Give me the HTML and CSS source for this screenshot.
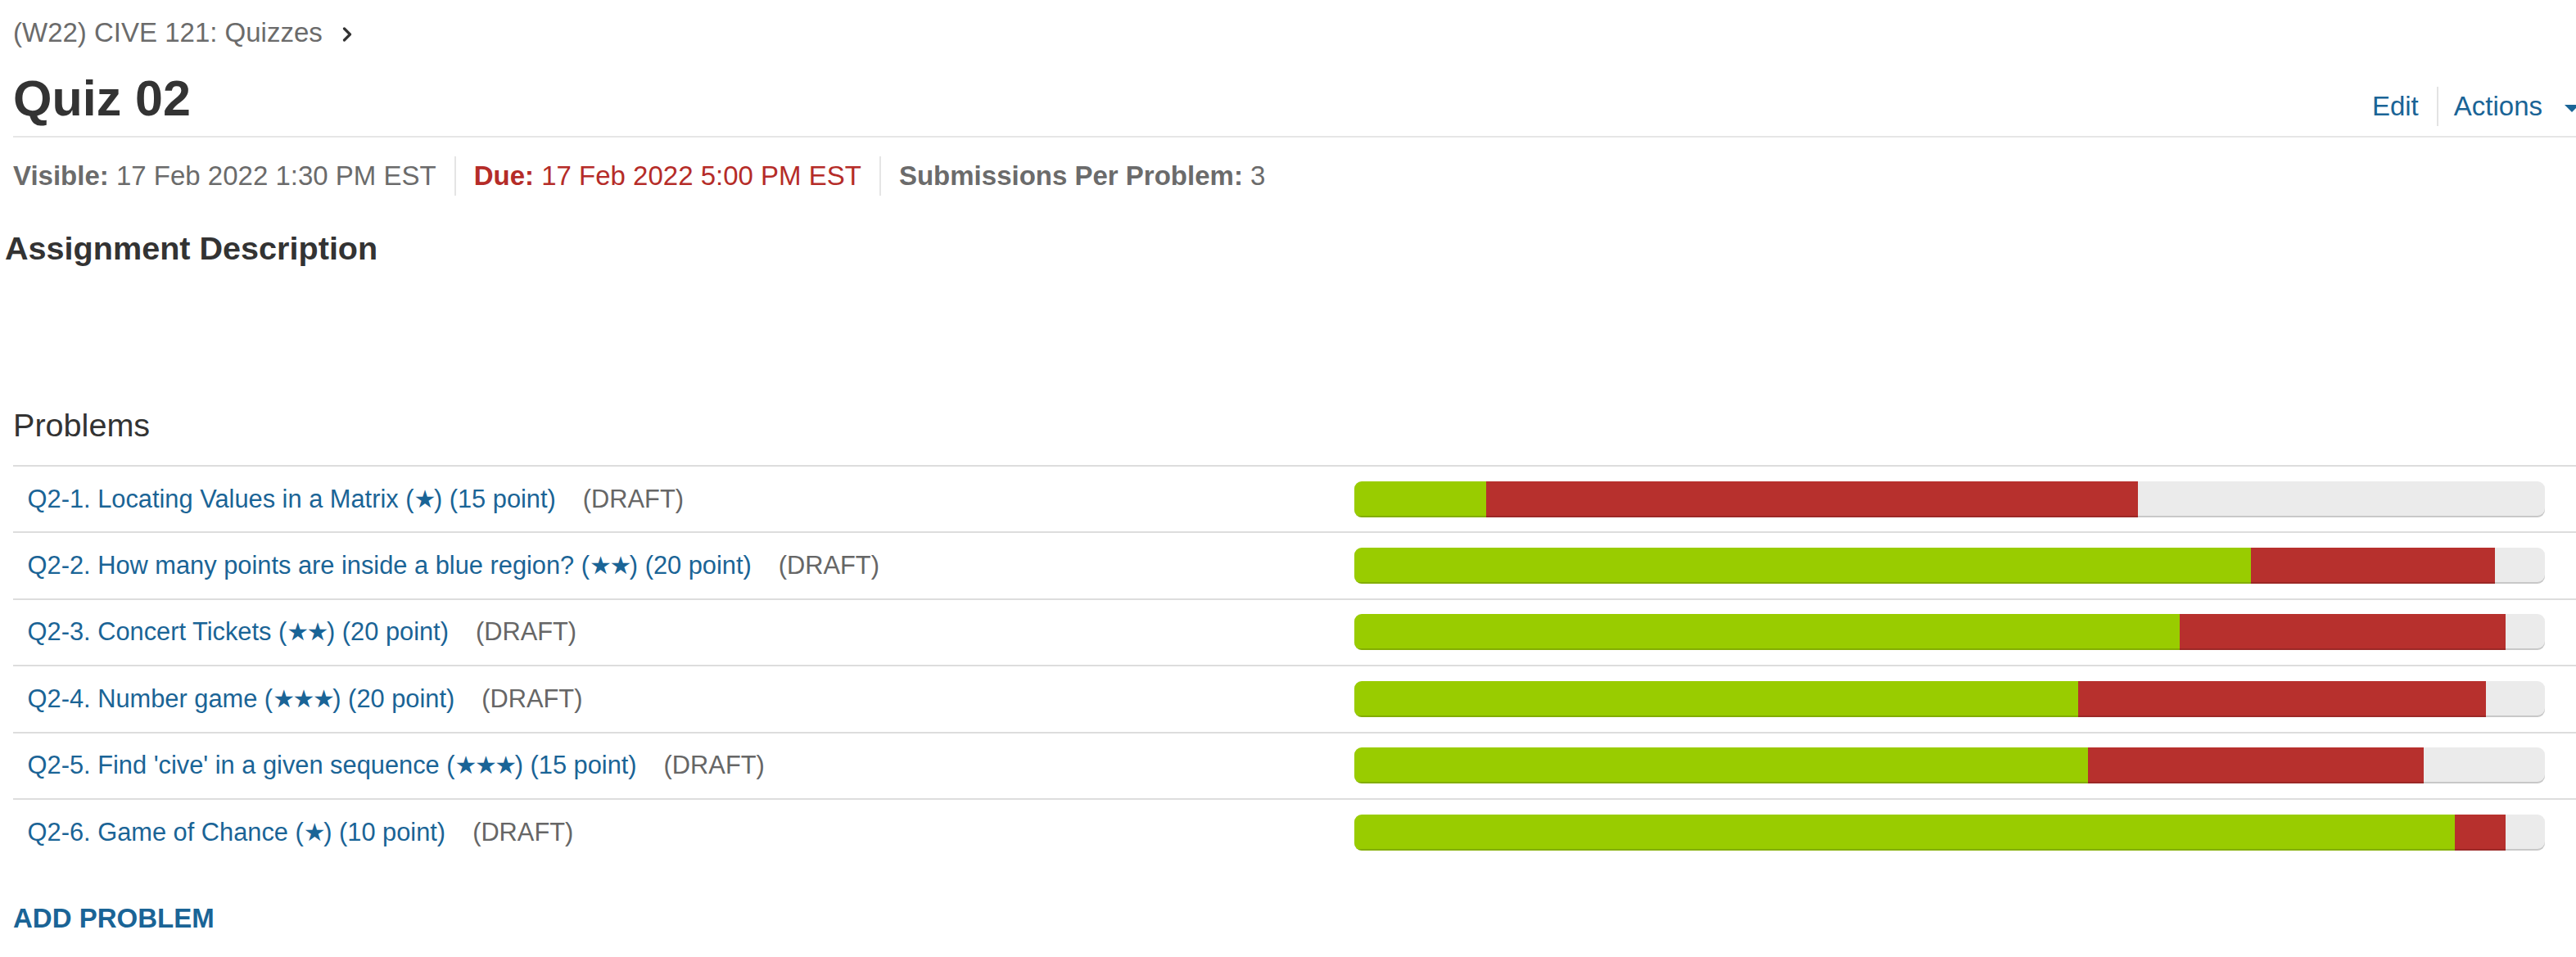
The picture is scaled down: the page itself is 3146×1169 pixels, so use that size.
FILE: index.html
```html
<!DOCTYPE html>
<html lang="en">
<head>
<meta charset="utf-8">
<title>Quiz 02</title>
<link rel="stylesheet" href="styles.css">
</head>
<body>
<nav class="breadcrumb">
  <a class="crumb" href="#">(W22) CIVE 121: Quizzes</a>
  <svg class="chev" viewBox="0 0 12 18" aria-hidden="true"><path d="M2.5 2 L9.5 9 L2.5 16" fill="none" stroke="#333" stroke-width="3.2" stroke-linecap="round" stroke-linejoin="round"/></svg>
</nav>

<header class="page-header">
  <h1>Quiz 02</h1>
  <div class="actions">
    <a class="edit" href="#">Edit</a>
    <a class="more" href="#">Actions<span class="caret"></span></a>
  </div>
</header>

<div class="meta">
  <div class="item"><b>Visible:</b> 17 Feb 2022 1:30 PM EST</div>
  <div class="item due"><b>Due:</b> 17 Feb 2022 5:00 PM EST</div>
  <div class="item"><b>Submissions Per Problem:</b> 3</div>
</div>

<h2 class="desc-title">Assignment Description</h2>

<h3 class="problems-title">Problems</h3>

<div class="problem-list">
  <div class="problem">
    <div class="name"><a href="#">Q2-1. Locating Values in a Matrix (<span class="stars">★</span>) (15 point)</a><span class="draft">(DRAFT)</span></div>
    <div class="bar-cell"><div class="bar"><div class="seg ok" style="width:11.1%"></div><div class="seg bad" style="width:54.7%"></div></div></div>
  </div>
  <div class="problem">
    <div class="name"><a href="#">Q2-2. How many points are inside a blue region? (<span class="stars">★★</span>) (20 point)</a><span class="draft">(DRAFT)</span></div>
    <div class="bar-cell"><div class="bar"><div class="seg ok" style="width:75.3%"></div><div class="seg bad" style="width:20.5%"></div></div></div>
  </div>
  <div class="problem">
    <div class="name"><a href="#">Q2-3. Concert Tickets (<span class="stars">★★</span>) (20 point)</a><span class="draft">(DRAFT)</span></div>
    <div class="bar-cell"><div class="bar"><div class="seg ok" style="width:69.3%"></div><div class="seg bad" style="width:27.4%"></div></div></div>
  </div>
  <div class="problem">
    <div class="name"><a href="#">Q2-4. Number game (<span class="stars">★★★</span>) (20 point)</a><span class="draft">(DRAFT)</span></div>
    <div class="bar-cell"><div class="bar"><div class="seg ok" style="width:60.8%"></div><div class="seg bad" style="width:34.2%"></div></div></div>
  </div>
  <div class="problem">
    <div class="name"><a href="#">Q2-5. Find 'cive' in a given sequence (<span class="stars">★★★</span>) (15 point)</a><span class="draft">(DRAFT)</span></div>
    <div class="bar-cell"><div class="bar"><div class="seg ok" style="width:61.6%"></div><div class="seg bad" style="width:28.2%"></div></div></div>
  </div>
  <div class="problem">
    <div class="name"><a href="#">Q2-6. Game of Chance (<span class="stars">★</span>) (10 point)</a><span class="draft">(DRAFT)</span></div>
    <div class="bar-cell"><div class="bar"><div class="seg ok" style="width:92.4%"></div><div class="seg bad" style="width:4.3%"></div></div></div>
  </div>
</div>

<a class="add" href="#">ADD PROBLEM</a>
</body>
</html>
```

FILE: styles.css
```css
* { box-sizing: border-box; }

html, body {
  margin: 0;
  padding: 0;
}

body {
  width: 3146px;
  overflow: hidden;
  background: #ffffff;
  color: #333333;
  font-family: "Liberation Sans", Arial, "DejaVu Sans", sans-serif;
}

a {
  color: #1a6496;
  text-decoration: none;
}

/* breadcrumb */
.breadcrumb {
  display: flex;
  align-items: center;
  gap: 24px;
  height: 80px;
  padding-left: 16px;
  font-size: 33px;
  line-height: 80px;
}

.breadcrumb .crumb {
  color: #6b6b6b;
}

.breadcrumb .chev {
  width: 12px;
  height: 18px;
  margin-top: 3px;
}

/* page header */
.page-header {
  display: flex;
  justify-content: space-between;
  align-items: baseline;
  margin: 0 -4px 0 16px;
  padding: 0 0 6px;
  border-bottom: 2px solid #e6e6e6;
}

.page-header h1 {
  margin: 0;
  font-size: 61px;
  line-height: 80px;
  font-weight: 700;
  color: #333333;
}

.actions {
  display: flex;
  align-items: baseline;
}

.actions a {
  font-size: 33px;
  line-height: 48px;
  color: #1a6496;
}

.actions .edit {
  padding-right: 22px;
  border-right: 2px solid #e3e3e3;
}

.actions .more {
  padding-left: 19px;
}

.caret {
  display: inline-block;
  width: 0;
  height: 0;
  margin-left: 27px;
  vertical-align: middle;
  border-top: 9px solid #1a6496;
  border-left: 9px solid transparent;
  border-right: 9px solid transparent;
}

/* meta */
.meta {
  display: flex;
  margin: 23px 0 0 16px;
  font-size: 33px;
  line-height: 48px;
  color: #6b6b6b;
}

.meta .item {
  padding: 0 22px;
  border-left: 2px solid #e5e5e5;
  white-space: nowrap;
}

.meta .item:first-child {
  padding-left: 0;
  border-left: 0;
}

.meta .due {
  color: #b52c28;
}

/* section titles */
.desc-title {
  margin: 42px 0 0 6px;
  font-size: 39.6px;
  line-height: 44px;
  font-weight: 700;
  color: #333333;
}

.problems-title {
  margin: 172px 0 0 16px;
  font-size: 39.6px;
  line-height: 44px;
  font-weight: 400;
  color: #333333;
}

/* problems */
.problem-list {
  margin: 27px 0 0 16px;
}

.problem {
  display: grid;
  grid-template-columns: 1620px 1490px;
  align-items: center;
  height: 81.4px;
  border-top: 2px solid #dddddd;
}

.problem .name {
  padding-left: 17.6px;
  font-size: 30.8px;
  white-space: nowrap;
}

.problem .stars {
  font-size: 30px;
  letter-spacing: -2.5px;
}

.problem .draft {
  margin-left: 33px;
  color: #666666;
}

.bar-cell {
  padding: 0 17.6px;
}

.bar {
  display: flex;
  height: 44px;
  background: #ebebeb;
  border-radius: 9px;
  overflow: hidden;
  box-shadow: inset 0 -2px 0 rgba(0, 0, 0, 0.15);
}

.seg {
  height: 100%;
  box-shadow: inset 0 -2px 0 rgba(0, 0, 0, 0.15);
}

.seg.ok {
  background: #99cc00;
}

.seg.bad {
  background: #b7302d;
}

.add {
  display: block;
  margin: 46px 0 0 16px;
  font-size: 33px;
  line-height: 40px;
  font-weight: 700;
  color: #1a6496;
}
```
